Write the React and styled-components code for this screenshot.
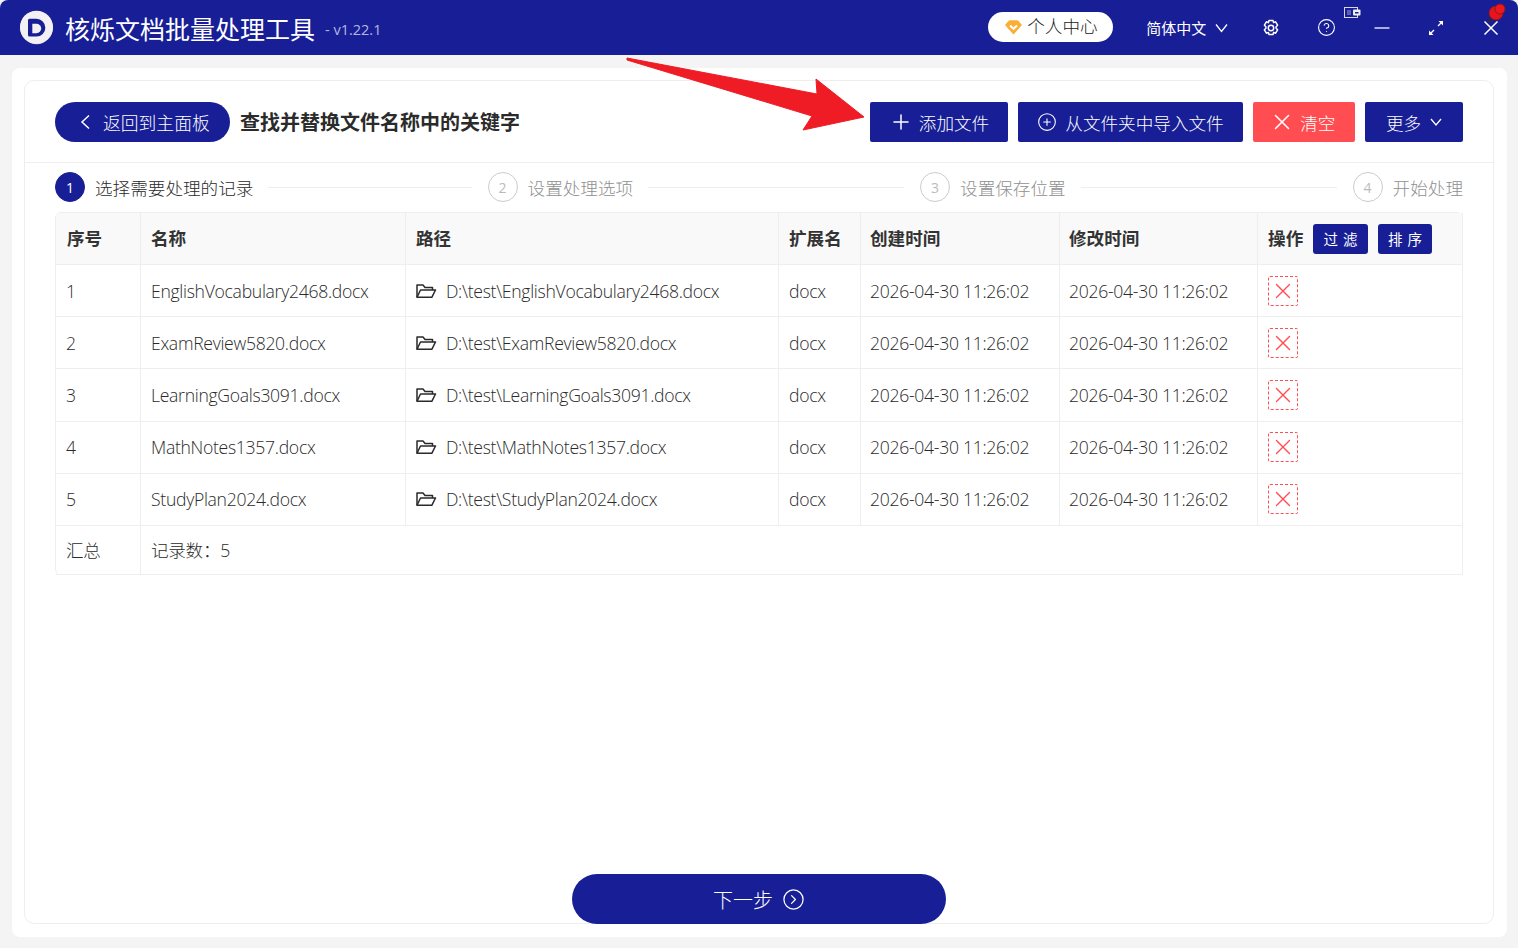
import React from 'react';
import styled, { createGlobalStyle } from 'styled-components';
import { Plus, CirclePlus, X, CircleHelp, CircleChevronRight } from 'lucide-react';

const NAVY = '#171e96';
const RED = '#ff4d52';
const LINE = '#eeeeee';
const FONT = '"Open Sans", "Noto Sans CJK SC", sans-serif';

const rows = [
  ['1', 'EnglishVocabulary2468.docx'],
  ['2', 'ExamReview5820.docx'],
  ['3', 'LearningGoals3091.docx'],
  ['4', 'MathNotes1357.docx'],
  ['5', 'StudyPlan2024.docx'],
];

const steps = [
  { n: 1, label: '选择需要处理的记录', active: true },
  { n: 2, label: '设置处理选项' },
  { n: 3, label: '设置保存位置' },
  { n: 4, label: '开始处理' },
];

const GlobalStyle = createGlobalStyle`
  html, body {
    margin: 0;
    padding: 0;
    height: 948px;
    overflow: hidden;
    background: #f4f4f4;
    font-family: ${FONT};
    color: #333;
  }
  * { box-sizing: border-box; }
`;

const Shell = styled.div`
  position: relative;
  width: 1518px;
  height: 948px;
  display: flex;
  flex-direction: column;
`;

const TitleBar = styled.header`
  height: 55px;
  flex: none;
  background: ${NAVY};
  border-radius: 8px 8px 0 0;
  display: flex;
  align-items: center;
  padding-left: 19px;
  color: #fff;
`;

const AppName = styled.h1`
  margin: 3px 0 0 10px;
  font-size: 25px;
  font-weight: 400;
  line-height: 1;
`;

const Version = styled.span`
  margin-left: 10px;
  margin-top: 4px;
  font-size: 14.5px;
  color: #b4b7dd;
`;

const UserPill = styled.div`
  margin: -1px 0 0 auto;
  width: 125px;
  height: 30px;
  border-radius: 15px;
  background: #fff;
  color: #222;
  display: flex;
  align-items: center;
  padding-left: 17px;
  gap: 5px;
  font-size: 17.6px;
  font-weight: 300;
  line-height: 28px;
`;

const PillText = styled.span`
  margin-top: -3px;
`;

const LangPicker = styled.div`
  margin-left: 33px;
  display: flex;
  align-items: center;
  gap: 9px;
  font-size: 15px;
`;

const WinButtons = styled.div`
  position: relative;
  display: flex;
  align-items: center;
  margin-left: 34px;
  margin-right: 18px;
  gap: 36.7px;
`;

const WinIcon = styled.svg`
  display: block;
  flex: none;
`;

const Snap = styled.svg`
  position: absolute;
  left: 82px;
  top: -11px;
`;

const Pin = styled.svg`
  position: absolute;
  right: -8px;
  top: -16px;
`;

const Body = styled.main`
  flex: 1;
  margin: 13px 11px 11px 12px;
  background: #fff;
  border-radius: 8px;
  padding: 12px 13px 13px 12px;
  display: flex;
`;

const Card = styled.section`
  flex: 1;
  min-width: 0;
  border: 1px solid ${LINE};
  border-radius: 10px;
  display: flex;
  flex-direction: column;
  padding: 0 30px;
`;

const Toolbar = styled.div`
  height: 82px;
  flex: none;
  margin: 0 -30px;
  padding: 21px 30px 0;
  border-bottom: 1px solid ${LINE};
  display: flex;
  align-items: flex-start;
`;

const BackButton = styled.button`
  width: 175px;
  height: 40px;
  border: 0;
  border-radius: 20px;
  background: ${NAVY};
  color: #fff;
  font: 300 17.8px ${FONT};
  display: flex;
  align-items: center;
  padding: 0 0 0 24px;
  gap: 12px;
`;

const PageTitle = styled.h2`
  margin: 1px auto 0 10px;
  height: 40px;
  line-height: 40px;
  font-size: 20px;
  font-weight: 700;
  color: #2b2b2b;
`;

const ToolButton = styled.button`
  height: 40px;
  width: ${p => p.$w}px;
  margin-left: 10px;
  padding: 0 ${p => p.$pr || 0}px 0 0;
  border: 0;
  border-radius: 2px;
  background: ${p => (p.$danger ? RED : NAVY)};
  color: #fff;
  font: 300 17.6px ${FONT};
  display: flex;
  align-items: center;
  justify-content: center;
  gap: ${p => p.$gap || 8}px;
`;

const Steps = styled.ol`
  height: 49px;
  flex: none;
  margin: 0;
  padding: 0 0 1px;
  list-style: none;
  display: flex;
  align-items: center;
`;

const Step = styled.li`
  display: flex;
  align-items: center;
  flex: ${p => (p.$last ? 'none' : 1)};
`;

const StepDot = styled.span`
  width: 30px;
  height: 30px;
  border-radius: 50%;
  flex: none;
  display: flex;
  align-items: center;
  justify-content: center;
  font-size: 14px;
  background: ${p => (p.$active ? NAVY : '#fff')};
  color: ${p => (p.$active ? '#fff' : '#bbb')};
  border: 1px solid ${p => (p.$active ? NAVY : '#ccc')};
`;

const StepLabel = styled.span`
  margin-left: 10px;
  font-size: 17.6px;
  font-weight: 300;
  white-space: nowrap;
  color: ${p => (p.$active ? '#2a2a2a' : '#8f8f8f')};
`;

const StepLine = styled.span`
  flex: 1;
  height: 1px;
  margin: 0 16px 0 15px;
  background: ${LINE};
`;

const Table = styled.table`
  width: 100%;
  flex: none;
  table-layout: fixed;
  border-collapse: separate;
  border-spacing: 0;
  border-top: 1px solid ${LINE};
  border-left: 1px solid ${LINE};
  border-radius: 6px 6px 0 6px;
  font-size: 17.6px;
  font-weight: 300;
  color: #2a2a2a;
`;

const Th = styled.th`
  height: 52px;
  padding: 0 0 2px ${p => p.$pad || 10}px;
  text-align: left;
  font-weight: 700;
  background: #f9f9f9;
  color: #333;
  border-right: 1px solid ${LINE};
  border-bottom: 1px solid ${LINE};
  white-space: nowrap;
`;

const Td = styled.td`
  height: ${p => p.$h || 52.2}px;
  padding: 0 0 ${p => (p.$h ? 1 : 0)}px ${p => p.$pad || 10}px;
  border-right: 1px solid ${LINE};
  border-bottom: 1px solid ${LINE};
  white-space: nowrap;
  letter-spacing: -0.3px;
`;

const HeadActions = styled.div`
  display: flex;
  align-items: center;
  margin-top: 2px;
`;

const HeadLabel = styled.span`
  margin-top: -2px;
  letter-spacing: 0.1px;
`;

const HeadAction = styled.button`
  height: 30px;
  width: ${p => p.$w}px;
  margin-left: ${p => (p.$first ? 9.500 : 10)}px;
  border: 0;
  border-radius: 3px;
  background: ${NAVY};
  color: #fff;
  font: 400 14.5px ${FONT};
  letter-spacing: 5px;
  padding: 0 0 0 5px;
`;

const PathCell = styled.span`
  display: flex;
  align-items: center;
  gap: 9px;
`;

const DeleteButton = styled.span`
  width: 30px;
  height: 30px;
  display: flex;
  align-items: center;
  justify-content: center;
  border: 1px dashed ${RED};
  border-radius: 2px;
  color: ${RED};
`;

const Footer = styled.div`
  flex: 1;
  display: flex;
  align-items: flex-end;
  justify-content: center;
  margin-bottom: -1px;
`;

const NextButton = styled.button`
  width: 374px;
  height: 50px;
  border: 0;
  border-radius: 25px;
  background: ${NAVY};
  color: #fff;
  font: 300 20px ${FONT};
  display: flex;
  align-items: center;
  justify-content: center;
  gap: 9px;
`;

const Arrow = styled.svg`
  position: absolute;
  left: 620px;
  top: 50px;
  pointer-events: none;
`;

function Logo() {
  return (
    <svg width="36" height="36" viewBox="0 0 36 36">
      <circle cx="17.500" cy="17.700" r="16.500" fill="#d9c9d6" />
      <circle cx="17.500" cy="17.200" r="16.500" fill="#f3f1f3" />
      <path d="M10.500 8.800h7a8.850 8.850 0 0 1 0 17.700h-7a1.500 1.500 0 0 1-1.500-1.500v-14.700a1.500 1.500 0 0 1 1.500-1.500z" fill={NAVY} />
      <path d="M13.300 13.800h4.200a4.700 4.700 0 0 1 0 9.400h-4.200z" fill="#f3f1f3" />
    </svg>
  );
}

function Diamond() {
  return (
    <svg width="17" height="15" viewBox="0 0 17 15">
      <path d="M4.500 1h8l3.500 4-7.500 8.500-7.500-8.500z" fill="#fbae35" stroke="#fbae35" strokeWidth="1.500" strokeLinejoin="round" />
      <path d="M5 5.500l3.500 3.300 3.500-3.300" fill="none" stroke="#fff" strokeWidth="2" />
    </svg>
  );
}

function Caret({ w = 13, h = 10, up = 1.500, down = 8.500, sw = 1.300 }) {
  return (
    <svg width={w} height={h} viewBox={`0 0 ${w} ${h}`} fill="none" stroke="#fff" strokeWidth={sw}>
      <path d={`M1 ${up}L${w / 2} ${down}L${w - 1} ${up}`} />
    </svg>
  );
}

function BackArrow() {
  return (
    <svg width="12" height="16" viewBox="0 0 12 16" fill="none" stroke="#fff" strokeWidth="1.500">
      <path d="M10 1.500L3 8l7 6.500" />
    </svg>
  );
}

function Gear() {
  return (
    <WinIcon width="18" height="18" viewBox="0 0 18 18" fill="none" stroke="#fff" strokeWidth="1.500">
      <path d="M7 1.500h4l.6 2.100 2-.8 2 3.400-1.500 1.500v1.600l1.500 1.500-2 3.400-2-.8-.6 2.100h-4l-.6-2.100-2 .8-2-3.400 1.500-1.500v-1.600l-1.500-1.500 2-3.400 2 .8z" strokeLinejoin="round" />
      <circle cx="9" cy="9" r="2.700" />
    </WinIcon>
  );
}

function Folder() {
  return (
    <svg width="21" height="16" viewBox="0 0 21 16" fill="none" stroke="#2a2a2a" strokeWidth="1.500" strokeLinejoin="round">
      <path d="M1 14V2h6l2 2.500h7.500V7" />
      <path d="M1 14.300h14.800L19.500 7H4.500z" />
    </svg>
  );
}

export default function App() {
  return (
    <Shell>
      <GlobalStyle />
      <TitleBar>
        <Logo />
        <AppName>核烁文档批量处理工具</AppName>
        <Version>- v1.22.1</Version>
        <UserPill><Diamond /><PillText>个人中心</PillText></UserPill>
        <LangPicker>简体中文<Caret /></LangPicker>
        <WinButtons>
          <Gear />
          <CircleHelp size={19} strokeWidth={1.400} />
          <Snap width="17" height="12" viewBox="0 0 17 12">
            <rect x="0.500" y="0.500" width="13" height="10" fill={NAVY} stroke="#d8d8e4" />
            <rect x="3" y="3" width="4" height="5" fill="#5a60b8" />
            <rect x="9" y="2.500" width="7.500" height="6" rx="1" fill="#eee" />
            <rect x="11" y="5" width="3.500" height="1.500" fill={NAVY} />
          </Snap>
          <WinIcon width="18" height="18" viewBox="0 0 18 18">
            <path d="M1.500 9h15" stroke="#dcdcf0" strokeWidth="1.500" />
          </WinIcon>
          <WinIcon width="18" height="18" viewBox="0 0 18 18" fill="none" stroke="#fff" strokeWidth="1.400">
            <path d="M3.500 14.500l3.500-3.500M11 7l3.500-3.500" />
            <path d="M2 11.500v4.500h4.500zM16 6.500v-4.500h-4.500z" fill="#fff" stroke="none" />
          </WinIcon>
          <WinIcon width="18" height="18" viewBox="0 0 18 18" fill="none" stroke="#fff" strokeWidth="1.500">
            <path d="M2.500 2.500l13 13M15.500 2.500l-13 13" />
          </WinIcon>
          <Pin width="22" height="24" viewBox="0 0 22 24">
            <path d="M1.500 20.500l5-6" stroke="#3a2a2a" strokeWidth="1.500" />
            <circle cx="10" cy="11" r="7" fill="#e8141c" stroke="#7a1a22" strokeWidth="0.800" />
            <circle cx="14" cy="7" r="5" fill="#f0161e" stroke="#8a1a20" strokeWidth="1" />
          </Pin>
        </WinButtons>
      </TitleBar>

      <Body>
        <Card>
          <Toolbar>
            <BackButton>
              <BackArrow />
              返回到主面板
            </BackButton>
            <PageTitle>查找并替换文件名称中的关键字</PageTitle>
            <ToolButton $w={138} $gap={6}><Plus size={24} strokeWidth={1.500} />添加文件</ToolButton>
            <ToolButton $w={225}><CirclePlus size={20} strokeWidth={1.300} />从文件夹中导入文件</ToolButton>
            <ToolButton $w={102} $gap={5.500} $pr={4} $danger><X size={26} strokeWidth={1.400} />清空</ToolButton>
            <ToolButton $w={98} $gap={9}>更多<Caret w={12} h={9} up={1} down={7} /></ToolButton>
          </Toolbar>

          <Steps>
            {steps.map((s, i) => (
              <Step key={s.n} $last={i === steps.length - 1}>
                <StepDot $active={s.active}>{s.n}</StepDot>
                <StepLabel $active={s.active}>{s.label}</StepLabel>
                {i < steps.length - 1 && <StepLine />}
              </Step>
            ))}
          </Steps>

          <Table>
            <colgroup>
              <col style={{ width: 85 }} />
              <col style={{ width: 265 }} />
              <col style={{ width: 373 }} />
              <col style={{ width: 82 }} />
              <col style={{ width: 199 }} />
              <col style={{ width: 198 }} />
              <col />
            </colgroup>
            <thead>
              <tr>
                <Th $pad={11}>序号</Th>
                <Th>名称</Th>
                <Th>路径</Th>
                <Th>扩展名</Th>
                <Th $pad={9}>创建时间</Th>
                <Th $pad={9}>修改时间</Th>
                <Th>
                  <HeadActions>
                    <HeadLabel>操作</HeadLabel>
                    <HeadAction $first $w={55}>过滤</HeadAction>
                    <HeadAction $w={54}>排序</HeadAction>
                  </HeadActions>
                </Th>
              </tr>
            </thead>
            <tbody>
              {rows.map(([n, name]) => (
                <tr key={n}>
                  <Td>{n}</Td>
                  <Td>{name}</Td>
                  <Td><PathCell><Folder />D:\test\{name}</PathCell></Td>
                  <Td>docx</Td>
                  <Td $pad={9}>2026-04-30 11:26:02</Td>
                  <Td $pad={9}>2026-04-30 11:26:02</Td>
                  <Td><DeleteButton><X size={26} strokeWidth={1.300} /></DeleteButton></Td>
                </tr>
              ))}
              <tr>
                <Td $h={49.500}>汇总</Td>
                <Td $h={49.500} colSpan={6}>记录数：5</Td>
              </tr>
            </tbody>
          </Table>

          <Footer>
            <NextButton>下一步<CircleChevronRight size={23} strokeWidth={1.300} /></NextButton>
          </Footer>
        </Card>
      </Body>

      <Arrow width="250" height="90" viewBox="0 0 250 90">
        <path d="M7 8 L197 44 L196 29 L244 67 L183 80 L192 66 L7 10 Z" fill="#ef1c25" stroke="#ef1c25" strokeWidth="1" strokeLinejoin="round" />
      </Arrow>
    </Shell>
  );
}
